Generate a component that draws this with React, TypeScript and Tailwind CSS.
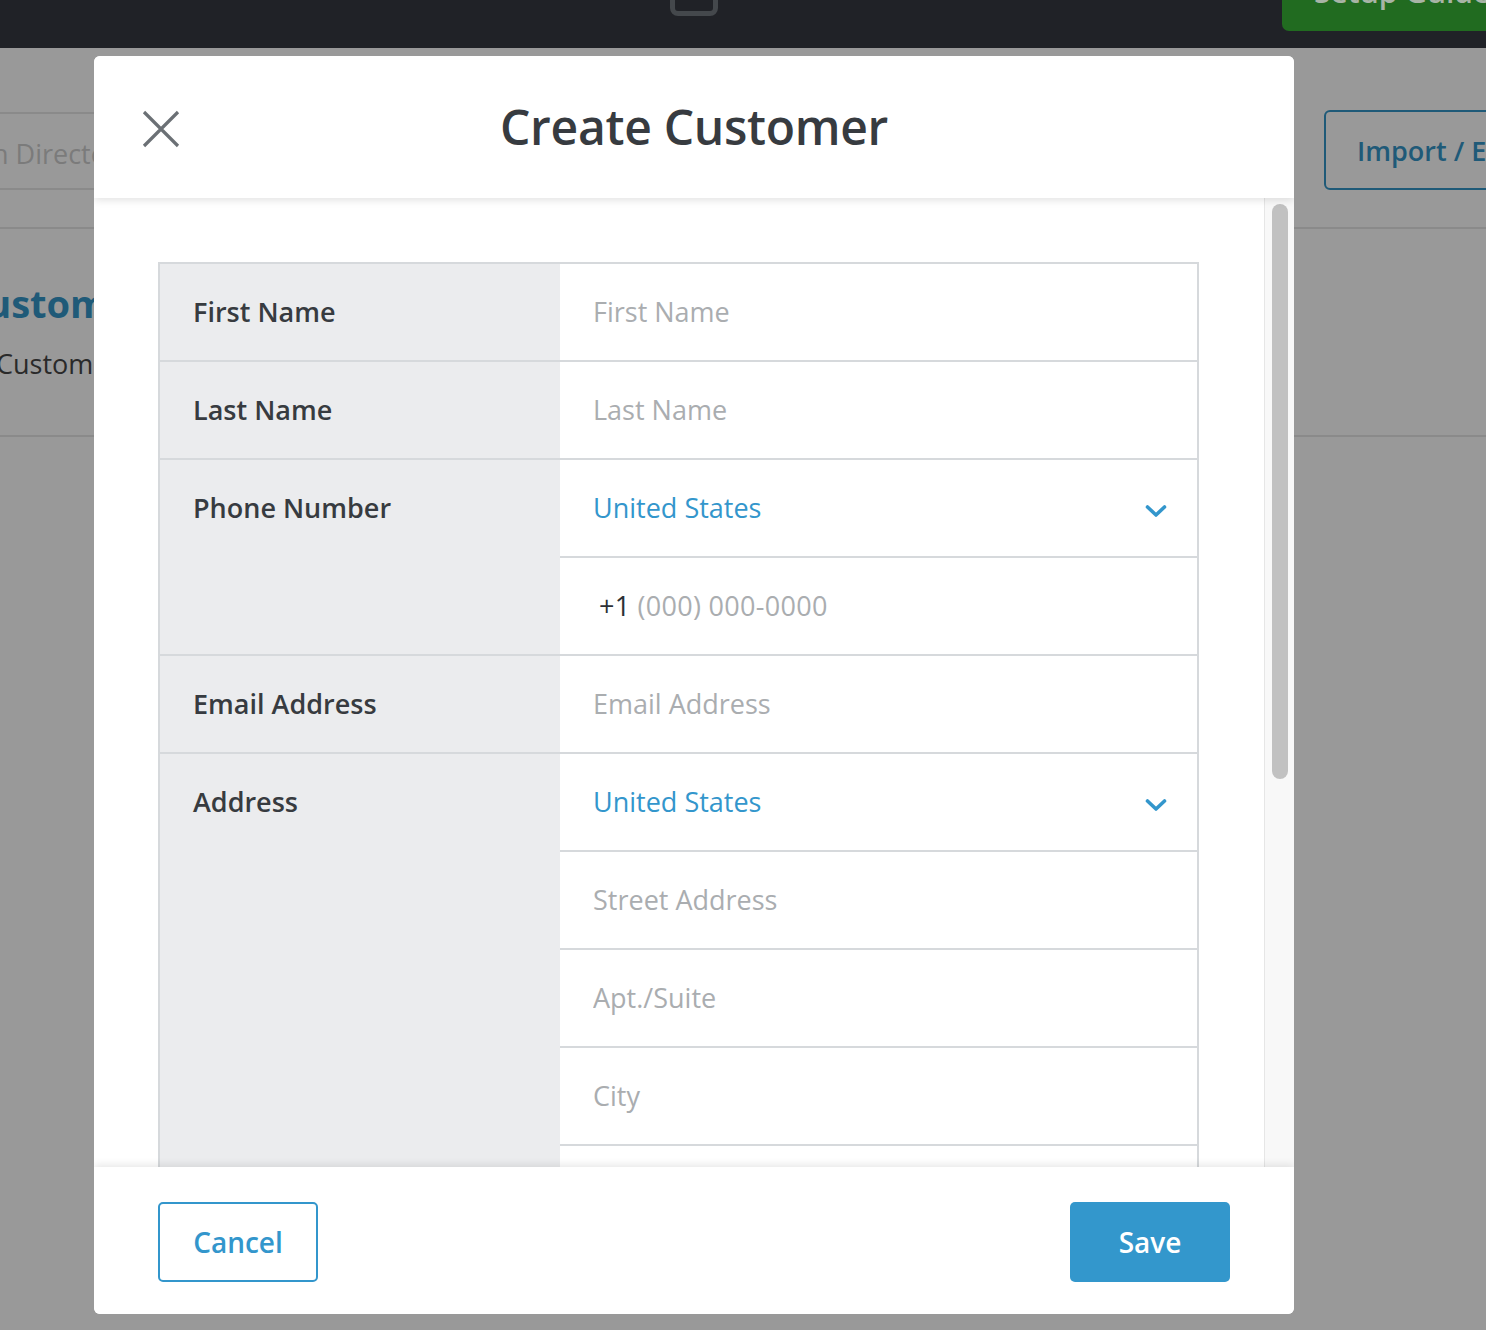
import { useState } from 'react';

type Field = { placeholder: string; kind?: 'select' | 'phone' };
type Group = { label: string; fields: Field[] };

const groups: Group[] = [
  { label: 'First Name', fields: [{ placeholder: 'First Name' }] },
  { label: 'Last Name', fields: [{ placeholder: 'Last Name' }] },
  { label: 'Phone Number', fields: [{ placeholder: 'United States', kind: 'select' }, { placeholder: '(000) 000-0000', kind: 'phone' }] },
  { label: 'Email Address', fields: [{ placeholder: 'Email Address' }] },
  {
    label: 'Address',
    fields: [
      { placeholder: 'United States', kind: 'select' },
      { placeholder: 'Street Address' },
      { placeholder: 'Apt./Suite' },
      { placeholder: 'City' },
      { placeholder: 'State' },
      { placeholder: 'ZIP' },
    ],
  },
];

function Chevron() {
  return (
    <svg width="22" height="14" viewBox="0 0 22 14" fill="none" className="mt-[6px]">
      <path d="M2.5 3 L11 11 L19.5 3" stroke="#3396cc" strokeWidth="3.6" strokeLinecap="round" strokeLinejoin="round" />
    </svg>
  );
}

function FieldCell({ field }: { field: Field }) {
  const [value, setValue] = useState('');
  if (field.kind === 'select') {
    return (
      <div className="h-[96px] flex items-center justify-between pl-[33px] pr-[30px]">
        <span className="text-[27px] text-[#3396cc]">{field.placeholder}</span>
        <Chevron />
      </div>
    );
  }
  if (field.kind === 'phone') {
    return (
      <div className="h-[96px] flex items-center pl-[39px] pr-[30px] text-[27px] tracking-[0.3px]">
        <span className="text-[#2c3036] mr-[7px]">+1</span>
        <input
          value={value}
          onChange={(e) => setValue(e.target.value)}
          placeholder={field.placeholder}
          className="flex-1 bg-transparent outline-none placeholder:text-[#aaadb0] text-[#2c3036]"
        />
      </div>
    );
  }
  return (
    <div className="h-[96px] flex items-center pl-[33px] pr-[30px]">
      <input
        value={value}
        onChange={(e) => setValue(e.target.value)}
        placeholder={field.placeholder}
        className="w-full bg-transparent outline-none text-[27px] placeholder:text-[#aaadb0] text-[#2c3036]"
      />
    </div>
  );
}

export default function App() {
  return (
    <div className="relative w-[1486px] h-[1330px] overflow-hidden bg-[#999999] font-['Open_Sans',sans-serif]">
      {/* page behind the overlay */}
      <div className="h-[48px] bg-[#202227] relative">
        <div className="absolute left-[670px] top-[-20px] w-[48px] h-[36px] rounded-[8px] border-[5px] border-[#44484c]" />
        <div className="absolute right-[-40px] top-0 w-[244px] h-[31px] rounded-b-[7px] bg-[#216b20] overflow-hidden">
          <span className="block pl-[32px] -mt-[31px] text-[30px] font-semibold text-[#a8b4a6]">Setup Guide</span>
        </div>
      </div>

      <div className="h-[181px] border-b-2 border-[#8a8a8a] flex items-end justify-between pb-[37px]">
        <div className="w-[140px] h-[78px] -ml-[40px] border-2 border-[#8a8a8a] rounded-[4px] flex items-center pl-[30px] pt-[6px] text-[27px] text-[#7b7b7b] whitespace-nowrap">
          h Directory
        </div>
        <div className="w-[200px] h-[80px] mr-[-38px] border-2 border-[#1f5a78] rounded-[6px] flex items-center pl-[31px] pt-[2px] text-[27px] font-semibold text-[#1f5a78] whitespace-nowrap">
          Import / Export
        </div>
      </div>

      <div className="h-[208px] border-b-2 border-[#8a8a8a] pt-[48px] whitespace-nowrap">
        <div className="-ml-[38px] text-[38px] font-bold text-[#1f5a78] leading-[52px]">Customers</div>
        <div className="-ml-[4px] mt-[15px] text-[27px] text-[#2a2a2a]">Customers</div>
      </div>

      {/* modal */}
      <div className="absolute left-[94px] top-[56px] w-[1200px] h-[1258px] bg-white rounded-[6px] overflow-hidden flex flex-col">
        <div className="relative z-10 h-[142px] shrink-0 flex items-center justify-center shadow-[0_2px_8px_rgba(0,0,0,0.12)] bg-white">
          <button className="absolute left-[46px] top-[52px] p-[2px]" aria-label="Close">
            <svg width="38" height="38" viewBox="0 0 38 38">
              <path d="M2 2 L36 36 M36 2 L2 36" stroke="#6b7075" strokeWidth="3.2" />
            </svg>
          </button>
          <h1 className="text-[48px] font-semibold text-[#373b40] tracking-[-0.3px]">Create Customer</h1>
        </div>

        <div className="flex-1 flex overflow-hidden">
          <div className="flex-1 pl-[64px] pr-[65px] pt-[64px] overflow-hidden">
            <div className="border-2 border-[#d6d9dc]">
              {groups.map((g, i) => (
                <div key={g.label} className={`flex ${i > 0 ? 'border-t-2 border-[#d6d9dc]' : ''}`}>
                  <div className="w-[400px] shrink-0 bg-[#ebecee]">
                    <div className="h-[96px] flex items-center pl-[33px] text-[27px] font-semibold text-[#373b40]">{g.label}</div>
                  </div>
                  <div className="flex-1 flex flex-col">
                    {g.fields.map((f, j) => (
                      <div key={j} className={j > 0 ? 'border-t-2 border-[#d6d9dc]' : ''}>
                        <FieldCell field={f} />
                      </div>
                    ))}
                  </div>
                </div>
              ))}
            </div>
          </div>
          <div className="w-[30px] shrink-0 bg-[#f8f8f8] border-l border-[#e6e6e6] pt-[6px] pl-[7px]">
            <div className="w-[16px] h-[575px] rounded-full bg-[#c1c1c1]" />
          </div>
        </div>

        <div className="relative z-10 h-[147px] shrink-0 bg-white flex items-center justify-between px-[64px] pt-[2px] shadow-[0_-2px_8px_rgba(0,0,0,0.1)]">
          <button className="w-[160px] h-[80px] rounded-[5px] border-2 border-[#3396cc] text-[28px] font-semibold text-[#3396cc]">Cancel</button>
          <button className="w-[160px] h-[80px] rounded-[5px] bg-[#3397cc] text-[28px] font-semibold text-white">Save</button>
        </div>
      </div>
    </div>
  );
}
